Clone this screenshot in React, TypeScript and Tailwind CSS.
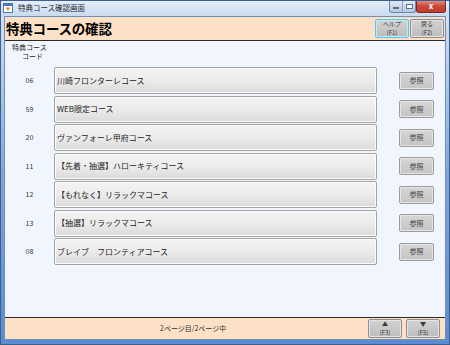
import React from 'react';

const courses = [
  { code: '06', name: '川崎フロンターレコース' },
  { code: '59', name: 'WEB限定コース' },
  { code: '20', name: 'ヴァンフォーレ甲府コース' },
  { code: '11', name: '【先着・抽選】ハローキティコース' },
  { code: '12', name: '【もれなく】リラックマコース' },
  { code: '13', name: '【抽選】リラックマコース' },
  { code: '08', name: 'ブレイブ　フロンティアコース' },
];

const font = { fontFamily: '"Noto Sans CJK JP", "Noto Sans", sans-serif' };

function FnButton({ top, bottom, focused }: { top: React.ReactNode; bottom: string; focused?: boolean }) {
  return (
    <button
      className={`flex flex-col items-center justify-center w-[34px] h-[19px] rounded-[2px] bg-gradient-to-b from-[#d2d2d2] to-[#bdbdbd] text-[#3a3a3a] text-[6px] leading-[8.5px] border ${
        focused ? 'border-[#5ac6e8] shadow-[inset_0_0_0_1px_#bfeaf6]' : 'border-[#8e8e8e] shadow-[inset_0_0_0_1px_#e4e4e4]'
      }`}
    >
      <span className="block leading-[8.5px]">{top}</span>
      <span className="block leading-[8.5px]">{bottom}</span>
    </button>
  );
}

export default function App() {
  return (
    <div
      className="w-[450px] h-[345px] flex flex-col bg-gradient-to-b from-[#dbe7f5] via-[#7fa6dc] to-[#5b8bd0] border border-[#3d5f8f] overflow-hidden"
      style={font}
    >
      <div className="h-[16px] flex items-center relative bg-gradient-to-b from-[#e6eef8] to-[#c9dbf0] -mx-px -mt-px px-[3px]">
        <svg width="10" height="10" viewBox="0 0 10 10" className="shrink-0">
          <rect x="0.5" y="0.5" width="9" height="9" fill="#fff" stroke="#4a78b8" />
          <rect x="1" y="1" width="8" height="2" fill="#4a78b8" />
          <path d="M2.5 4.5 L5 8 L7.5 4.5 Z" fill="#e8922e" />
        </svg>
        <span className="ml-[5px] text-[7.5px] text-[#1e2a3a] leading-none">特典コース確認画面</span>
        <div className="absolute right-[4px] top-0 flex">
          <div className="w-[27px] h-[13px] flex rounded-b-[3px] border border-t-0 border-[#6d87ab] bg-gradient-to-b from-[#e4ecf6] to-[#b7c9e0] overflow-hidden">
            <div className="flex-1 flex items-end justify-center pb-[3px] border-r border-[#8fa4c2]">
              <div className="w-[6px] h-[2px] bg-[#f4f7fb] border border-[#5c6f8c]" />
            </div>
            <div className="flex-1 flex items-center justify-center">
              <div className="w-[7px] h-[5px] border border-[#5c6f8c] bg-[#f4f7fb]" />
            </div>
          </div>
          <div className="w-[30px] h-[13px] rounded-b-[3px] border border-t-0 border-[#7a2a24] bg-gradient-to-b from-[#e3998f] via-[#c9473b] to-[#c23a2d] flex items-center justify-center text-white text-[8px] font-bold leading-none">
            x
          </div>
        </div>
      </div>

      <div className="flex-1 flex flex-col mx-[3px] mb-[4px] border border-[#6f8fb8]">
        <div className="h-[24px] bg-[#fde1c6] flex items-center justify-between border-b border-[#2a2a2a] pl-[1px] pr-[1px]">
          <span className="text-[13.5px] font-bold text-black leading-none tracking-[-0.2px]">特典コースの確認</span>
          <div className="flex gap-[1px]">
            <FnButton top="ヘルプ" bottom="(F1)" focused />
            <FnButton top="戻る" bottom="(F2)" />
          </div>
        </div>

        <div className="flex-1 bg-[#f1f6fe] flex flex-col">
          <div className="w-[50px] pt-[2px] pl-[7px] text-[7px] leading-[9px] text-[#222]">
            <div>特典コース</div>
            <div className="pl-[10px]">コード</div>
          </div>
          <div className="mt-[6px] flex flex-col gap-[1.5px]">
            {courses.map((c) => (
              <div key={c.code} className="flex items-center h-[27px]">
                <div className="w-[49px] text-center text-[7px] text-[#333]">{c.code}</div>
                <button className="w-[323px] h-[27px] rounded-[2px] border border-[#a3a3a3] bg-gradient-to-b from-[#f3f3f3] via-[#ececec] to-[#dadada] text-left pl-[2px] text-[8px] text-[#222] shadow-[inset_0_0_0_1px_#fbfbfb]">
                  {c.name}
                </button>
                <button className="ml-[22px] w-[35px] h-[18px] rounded-[2px] border border-[#9b9b9b] bg-gradient-to-b from-[#d6d6d6] to-[#c4c4c4] text-[7px] text-[#444] shadow-[inset_0_0_0_1px_#e6e6e6]">
                  参照
                </button>
              </div>
            ))}
          </div>
        </div>

        <div className="h-[22px] bg-[#fde1c6] border-t border-[#2a2a2a] flex items-center">
          <span className="ml-[155px] text-[7px] text-[#333]">2ページ目/2ページ中</span>
          <div className="ml-auto mr-[5px] flex gap-[4px]">
            <FnButton top="▲" bottom="(F3)" />
            <FnButton top="▼" bottom="(F5)" />
          </div>
        </div>
      </div>
    </div>
  );
}
